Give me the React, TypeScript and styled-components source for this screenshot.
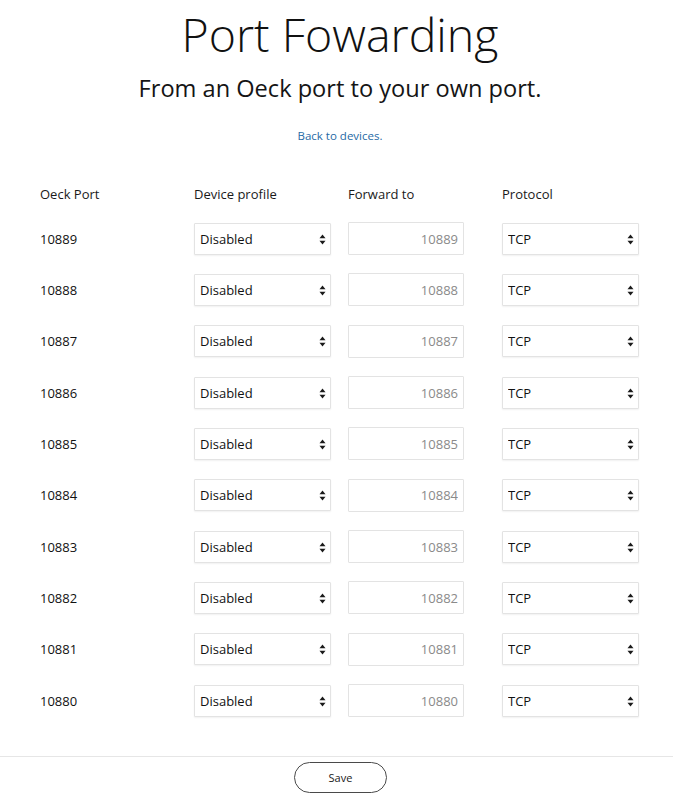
import styled, { createGlobalStyle } from 'styled-components'

const ports = [10889, 10888, 10887, 10886, 10885, 10884, 10883, 10882, 10881, 10880]

const GlobalStyle = createGlobalStyle`
  html, body {
    margin: 0;
    padding: 0;
    background: #ffffff;
  }
  body {
    font-family: 'Open Sans', 'Liberation Sans', sans-serif;
    color: #1a1a1a;
  }
`

function Arrows() {
  return (
    <ArrowIcon width="7" height="11" viewBox="0 0 7 11">
      <path d="M3.5 0.5 L6.5 4.2 H0.5 Z" fill="#1a1a1a" />
      <path d="M3.5 10.5 L6.5 6.8 H0.5 Z" fill="#1a1a1a" />
    </ArrowIcon>
  )
}

/**
 * Port forwarding page
 */
export default function App() {
  return (
    <Page>
      <GlobalStyle />
      <Intro>
        <Title>Port Fowarding</Title>
        <Subtitle>From an Oeck port to your own port.</Subtitle>
        <BackLink href="#">Back to devices.</BackLink>
      </Intro>

      <Table>
        <HeaderRow>
          <HeaderCell>Oeck Port</HeaderCell>
          <HeaderCell>Device profile</HeaderCell>
          <HeaderCell>Forward to</HeaderCell>
          <HeaderCell>Protocol</HeaderCell>
        </HeaderRow>
        {ports.map((port) => (
          <Row key={port}>
            <PortCell>{port}</PortCell>
            <SelectWrap>
              <Select defaultValue="Disabled">
                <option>Disabled</option>
              </Select>
              <Arrows />
            </SelectWrap>
            <PortInput defaultValue={port} />
            <SelectWrap>
              <Select defaultValue="TCP">
                <option>TCP</option>
                <option>UDP</option>
              </Select>
              <Arrows />
            </SelectWrap>
          </Row>
        ))}
      </Table>

      <Footer>
        <SaveButton>Save</SaveButton>
      </Footer>
    </Page>
  )
}

// Styled components
const Page = styled.div`
  display: flex;
  flex-direction: column;
  padding-top: 5px;
`

const Intro = styled.div`
  display: flex;
  flex-direction: column;
  align-items: center;
  padding-left: 7px;
`

const Title = styled.h1`
  margin: 0;
  font-size: 46.5px;
  font-weight: 300;
  line-height: 58px;
  color: #111111;
`

const Subtitle = styled.h2`
  margin: 9px 0 0;
  font-size: 23.6px;
  font-weight: 400;
  line-height: 32px;
  color: #151515;
`

const BackLink = styled.a`
  margin-top: 24px;
  font-size: 11.5px;
  line-height: 16px;
  color: #1f6aa5;
  text-decoration: none;
`

const Table = styled.div`
  margin-top: 30px;
  padding: 0 33px 0 40px;
  display: flex;
  flex-direction: column;
`

const HeaderRow = styled.div`
  display: grid;
  grid-template-columns: 154px 154px 154px 1fr;
  height: 39px;
  align-items: center;
`

const HeaderCell = styled.div`
  font-size: 13px;
  color: #1a1a1a;
`

const Row = styled.div`
  display: grid;
  grid-template-columns: 154px 154px 154px 1fr;
  height: 51.33px;
  align-items: center;
`

const PortCell = styled.div`
  font-size: 13px;
  color: #111111;
`

const SelectWrap = styled.div`
  position: relative;
  width: 137px;
  height: 32px;
`

const Select = styled.select`
  appearance: none;
  -webkit-appearance: none;
  width: 100%;
  height: 100%;
  box-sizing: border-box;
  margin: 0;
  padding: 0 20px 0 5px;
  border: 1px solid #e3e3e3;
  border-radius: 1px;
  background: #ffffff;
  box-shadow: 0 1px 2px rgba(0, 0, 0, 0.06);
  font-family: 'Open Sans', 'Liberation Sans', sans-serif;
  font-size: 13px;
  color: #111111;
  outline: none;
`

const ArrowIcon = styled.svg`
  position: absolute;
  right: 5px;
  top: 11px;
  pointer-events: none;
`

const PortInput = styled.input`
  width: 116px;
  height: 33px;
  box-sizing: border-box;
  margin: 0;
  padding: 0 5px;
  border: 1px solid #e3e3e3;
  border-radius: 1px;
  background: #ffffff;
  text-align: right;
  font-family: 'Open Sans', 'Liberation Sans', sans-serif;
  font-size: 13px;
  color: #8a8a8a;
  outline: none;
`

const Footer = styled.div`
  margin-top: 30px;
  border-top: 1px solid #e6e6e6;
  display: flex;
  justify-content: center;
  padding: 5px 0 0 8px;
`

const SaveButton = styled.button`
  width: 93px;
  height: 31px;
  border: 1px solid #4a4a4a;
  border-radius: 16px;
  background: #ffffff;
  font-family: 'Open Sans', 'Liberation Sans', sans-serif;
  font-size: 11px;
  color: #1a1a1a;
  cursor: pointer;
`
